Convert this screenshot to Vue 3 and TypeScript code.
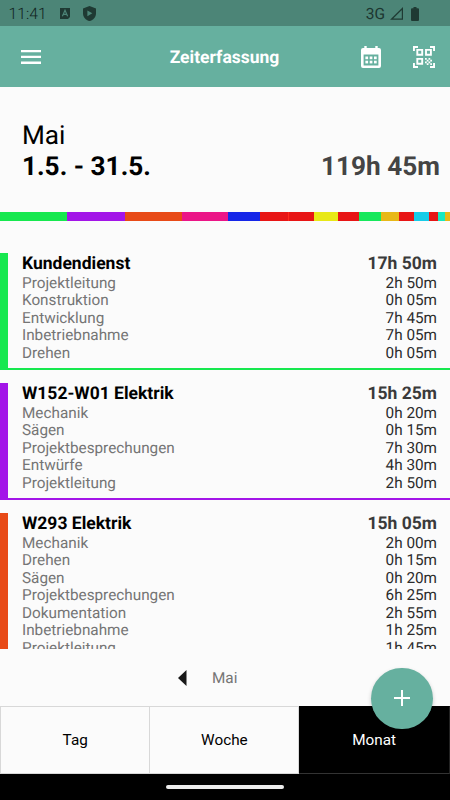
<script setup lang="ts">
interface Entry { name: string; time: string }
interface Project { name: string; time: string; color: string; entries: Entry[] }

const rows = (...list: [string, string][]): Entry[] => list.map(([name, time]) => ({ name, time }))

const segments: { color: string; width: number }[] = [
  { color: '#17e84f', width: 67 },
  { color: '#a315e8', width: 58 },
  { color: '#e84a17', width: 57 },
  { color: '#eb1587', width: 46 },
  { color: '#1526e8', width: 32 },
  { color: '#e81515', width: 28.3 },
  { color: '#ff2a1c', width: 0.4 },
  { color: '#e81515', width: 25.6 },
  { color: '#e8e817', width: 23.5 },
  { color: '#e81515', width: 21.5 },
  { color: '#17e85c', width: 21.7 },
  { color: '#e8b817', width: 17.8 },
  { color: '#e81515', width: 15.5 },
  { color: '#17cce8', width: 14.3 },
  { color: '#e81515', width: 9.3 },
  { color: '#17e8c0', width: 7.4 },
  { color: '#e8b817', width: 4.7 },
]

const projects: Project[] = [
  {
    name: 'Kundendienst', time: '17h 50m', color: '#17e84f',
    entries: rows(['Projektleitung', '2h 50m'], ['Konstruktion', '0h 05m'], ['Entwicklung', '7h 45m'], ['Inbetriebnahme', '7h 05m'], ['Drehen', '0h 05m']),
  },
  {
    name: 'W152-W01 Elektrik', time: '15h 25m', color: '#a315e8',
    entries: rows(['Mechanik', '0h 20m'], ['Sägen', '0h 15m'], ['Projektbesprechungen', '7h 30m'], ['Entwürfe', '4h 30m'], ['Projektleitung', '2h 50m']),
  },
  {
    name: 'W293 Elektrik', time: '15h 05m', color: '#e84a17',
    entries: rows(['Mechanik', '2h 00m'], ['Drehen', '0h 15m'], ['Sägen', '0h 20m'], ['Projektbesprechungen', '6h 25m'], ['Dokumentation', '2h 55m'], ['Inbetriebnahme', '1h 25m'], ['Projektleitung', '1h 45m']),
  },
]

const tabs = ['Tag', 'Woche', 'Monat']
const activeTab = 'Monat'
const calendarDots = [0, 1, 2, 3, 4, 5]
</script>

<template>
  <div class="screen">
    <div class="status">
      <span class="clock">11:41</span>
      <svg class="app-badge" width="10" height="11" viewBox="0 0 10 11">
        <path fill="#1f3a33" d="M0 0h10v9l-2 2H0z" />
        <path fill="none" stroke="#4c8577" stroke-width="1.2" d="M2.4 8.2 5 2.2l2.6 6M3.4 6.4h3.2" />
      </svg>
      <svg class="shield" width="13" height="15" viewBox="0 0 13 15">
        <path fill="#1f3a33" d="M6.5 0 13 2.4v5C13 11 10.3 14 6.5 15 2.7 14 0 11 0 7.4v-5z" />
        <path fill="#4c8577" d="M4.4 4.4 9.3 7.3 4.4 10.2z" />
      </svg>
      <span class="network">3G</span>
      <svg class="signal" width="14" height="13" viewBox="0 0 14 13">
        <path fill="none" stroke="#1f3a33" stroke-width="1.2" d="M12.4 1.5v10.7H1.5z" />
      </svg>
      <svg class="battery" width="8" height="14" viewBox="0 0 8 14">
        <path fill="#1f3a33" d="M2.5 0h3v1.3H7a1 1 0 0 1 1 1V13a1 1 0 0 1-1 1H1a1 1 0 0 1-1-1V2.3a1 1 0 0 1 1-1h1.5z" />
      </svg>
    </div>

    <header class="appbar">
      <svg class="menu" width="20" height="14" viewBox="0 0 20 14">
        <path fill="#fff" d="M0 0h20v2.3H0zM0 5.8h20v2.3H0zM0 11.6h20v2.3H0z" />
      </svg>
      <h1 class="title">Zeiterfassung</h1>
      <svg class="calendar" width="20" height="22" viewBox="0 0 20 22">
        <path fill="#fff" fill-rule="evenodd" d="M3.3 0h2.4v2h8.6V0h2.4v2H18a2 2 0 0 1 2 2v16a2 2 0 0 1-2 2H2a2 2 0 0 1-2-2V4a2 2 0 0 1 2-2h1.3zM2.6 8.5v10.9h14.8V8.5z" />
        <rect v-for="n in calendarDots" :key="n" fill="#fff" :x="4.4 + (n % 3) * 4.3" :y="n < 3 ? 10.5 : 14.7" width="2.7" height="2.7" />
      </svg>
      <svg class="qr" width="22" height="22" viewBox="0 0 22 22">
        <g fill="none" stroke="#fff" stroke-width="1.9">
          <path d="M.95 5V.95H5M17 .95h4.05V5M21.05 17v4.05H17M5 21.05H.95V17" />
          <path d="M4.3 3.9h4.9v4.9H4.3zM13 3.9h4.9v4.9H13zM4.3 12.9h4.9v4.9H4.3z" />
        </g>
        <path fill="#fff" d="M12 12h1.75v1.75H12zM15.5 12h1.75v1.75H15.5zM13.75 13.75h1.75v1.75h-1.75zM17.25 13.75H19v1.75h-1.75zM12 15.5h1.75v1.75H12zM15.5 15.5h1.75v1.75H15.5zM13.75 17.25h1.75V19h-1.75zM17.25 17.25H19V19h-1.75z" />
      </svg>
    </header>

    <section class="summary">
      <div class="period">
        <span class="month">Mai</span>
        <span class="range">1.5. - 31.5.</span>
      </div>
      <span class="total">119h 45m</span>
    </section>

    <div class="distribution">
      <span v-for="(s, i) in segments" :key="i" class="segment" :style="{ flexGrow: s.width, backgroundColor: s.color }" />
    </div>

    <main class="list">
      <article v-for="p in projects" :key="p.name" class="project" :style="{ borderColor: p.color }">
        <div class="row head">
          <span>{{ p.name }}</span><span class="time">{{ p.time }}</span>
        </div>
        <div v-for="e in p.entries" :key="e.name" class="row">
          <span>{{ e.name }}</span><span class="time">{{ e.time }}</span>
        </div>
      </article>
    </main>

    <nav class="pager">
      <svg class="prev" width="9" height="16" viewBox="0 0 9 16"><path fill="#181818" d="M8.5 0v16L0 8z" /></svg>
      <span class="pager-label">Mai</span>
    </nav>

    <div class="tabs">
      <button v-for="t in tabs" :key="t" class="tab" :class="{ active: t === activeTab }">{{ t }}</button>
      <button class="fab" aria-label="+">
        <svg width="16" height="16" viewBox="0 0 16 16"><path fill="#fff" d="M7 0h2v7h7v2H9v7H7V9H0V7h7z" /></svg>
      </button>
    </div>
    <div class="gesture"><span class="pill" /></div>
  </div>
</template>

<style>
body {
  margin: 0;
}
</style>

<style scoped>
.screen {
  display: flex;
  flex-direction: column;
  width: 450px;
  height: 800px;
  overflow: hidden;
  background: #fbfbfb;
  color: #000;
  font-family: Roboto, sans-serif;
  text-rendering: geometricPrecision;
}
.status {
  display: flex;
  align-items: center;
  box-sizing: border-box;
  flex: none;
  height: 26px;
  padding: 1px 31px 0 8.5px;
  background: #4c8577;
  color: #1c3630;
  font-size: 15.7px;
}
.clock { width: 51.5px; font-weight: 300; color: #10231e; }
.shield { margin-left: 13px; }
.network { margin-left: auto; font-size: 15.5px; }
.signal { margin-left: 5px; }
.battery { margin-left: 7px; }
.appbar {
  display: flex;
  align-items: center;
  box-sizing: border-box;
  flex: none;
  height: 61px;
  padding: 0 15px 0 21px;
  background: #66b09f;
}
.title {
  flex: 1;
  margin: 0 0 0 47px;
  padding-top: 2px;
  text-align: center;
  color: #fff;
  font-size: 17.5px;
  line-height: 20px;
  font-weight: 700;
}
.calendar { margin-right: 32px; }
.summary {
  display: flex;
  justify-content: space-between;
  align-items: flex-end;
  box-sizing: border-box;
  flex: none;
  height: 125px;
  padding: 0 10px 30px 22px;
}
.period { display: flex; flex-direction: column; }
.month { font-size: 26.2px; line-height: 31px; }
.range, .total { font-size: 26.2px; line-height: 30px; font-weight: 700; }
.total { color: #444; }
.distribution { display: flex; flex: none; height: 9px; }
.segment { flex-basis: 0; }
.list {
  flex: none;
  height: 396px;
  margin-top: 32px;
  overflow: hidden;
}
.project {
  margin-bottom: 13px;
  padding: 0 13px 6px 14px;
  border-style: solid;
  border-width: 0 0 2px 8px;
}
.row {
  display: flex;
  justify-content: space-between;
  height: 17.5px;
  line-height: 17.5px;
  font-size: 15.3px;
  color: #757575;
}
.row .time { color: #2c2c2c; }
.row.head {
  height: 21.5px;
  line-height: 22px;
  font-size: 17.5px;
  font-weight: 700;
  color: #000;
}
.head .time { color: #3a3a3a; }
.pager {
  display: flex;
  align-items: center;
  flex: none;
  height: 57px;
  padding-left: 178px;
}
.pager-label { margin-left: 25px; font-size: 15.3px; color: #757575; }
.tabs {
  position: relative;
  display: grid;
  grid-template-columns: 150.4px 149px 1fr;
  flex: none;
  height: 68px;
}
.tab {
  margin: 0;
  padding: 0;
  border: 1px solid #d8d8d8;
  border-left-width: 0;
  background: #fbfbfb;
  color: #000;
  font: 400 15.3px/20px Roboto, sans-serif;
}
.tab:first-child { border-left-width: 1px; }
.tab.active { background: #000; border-color: #000 #222 #333 #000; color: #fff; }
.fab {
  position: absolute;
  top: -38.5px;
  right: 17.3px;
  display: flex;
  align-items: center;
  justify-content: center;
  width: 61.5px;
  height: 61.5px;
  padding: 0;
  border: 0;
  border-radius: 50%;
  background: #66b09f;
  box-shadow: 0 2px 4px rgba(0, 0, 0, 0.2);
}
.gesture {
  display: flex;
  align-items: center;
  justify-content: center;
  flex: 1;
  background: #000;
}
.pill { width: 118px; height: 4px; border-radius: 2px; background: #ececec; }
</style>
